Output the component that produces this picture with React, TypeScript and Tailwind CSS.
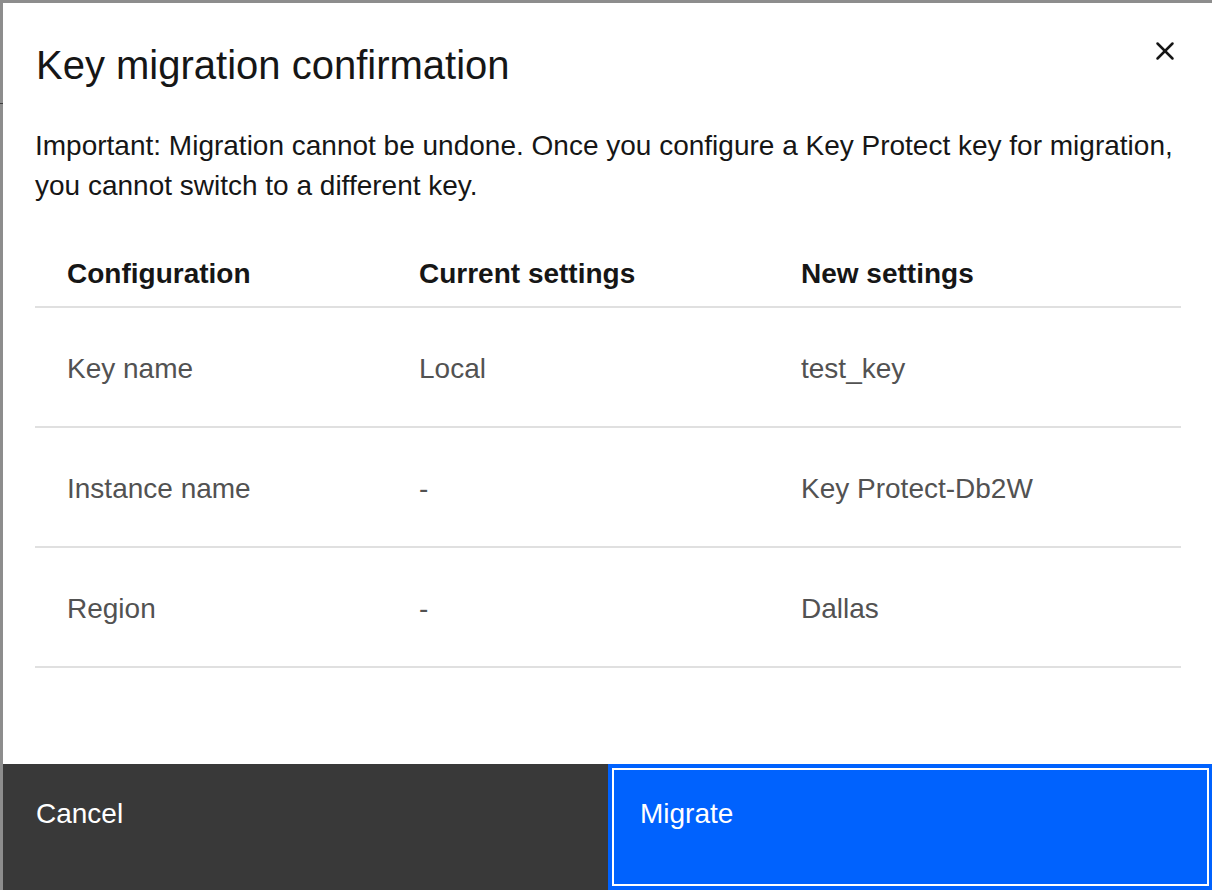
import { X } from 'lucide-react';

const rows = [
  { config: 'Key name', current: 'Local', next: 'test_key' },
  { config: 'Instance name', current: '-', next: 'Key Protect-Db2W' },
  { config: 'Region', current: '-', next: 'Dallas' },
];

export default function App() {
  return (
    <div
      className="w-[1212px] h-[890px] overflow-hidden bg-[#8d8d8d] pt-[3px] flex"
      style={{ fontFamily: '"Liberation Sans", Arial, sans-serif' }}
    >
      {/* left edge of the page behind the modal */}
      <div className="w-[3px] shrink-0">
        <div className="mt-[100px] h-px bg-[#3d3d3d]" />
      </div>

      {/* Modal */}
      <div className="w-[1210px] shrink-0 bg-white flex flex-col">
        {/* Header */}
        <div className="flex items-start">
          <h2 className="flex-1 pl-[33px] pt-[34px] text-[40px] leading-[56px] font-normal text-[#161616]">
            Key migration confirmation
          </h2>
          <button className="w-[96px] h-[96px] flex items-center justify-center text-[#161616]">
            <X size={30} strokeWidth={2} />
          </button>
        </div>

        {/* Body */}
        <div className="flex-1 px-[32px]">
          <p className="mt-[27px] text-[28px] leading-[40px] text-[#161616] whitespace-nowrap">
            Important: Migration cannot be undone. Once you configure a Key Protect key for migration,
            <br />
            you cannot switch to a different key.
          </p>

          <table className="mt-[35px] w-[1146px] table-fixed border-collapse text-[28px]">
            <thead>
              <tr className="h-[66px] border-b-2 border-[#e0e0e0]">
                <th className="w-[352px] pl-[32px] text-left font-bold text-[#161616]">Configuration</th>
                <th className="w-[382px] pl-[32px] text-left font-bold text-[#161616]">Current settings</th>
                <th className="pl-[32px] text-left font-bold text-[#161616]">New settings</th>
              </tr>
            </thead>
            <tbody>
              {rows.map((row) => (
                <tr key={row.config} className="h-[120px] border-b-2 border-[#e0e0e0] text-[#525252]">
                  <td className="pl-[32px] pt-[3px]">{row.config}</td>
                  <td className="pl-[32px] pt-[3px]">{row.current}</td>
                  <td className="pl-[32px] pt-[3px]">{row.next}</td>
                </tr>
              ))}
            </tbody>
          </table>
        </div>

        {/* Footer */}
        <div className="grid grid-cols-2 h-[126px]">
          <button className="bg-[#393939] text-white text-[28px] leading-[40px] text-left pl-[33px] pt-[30px] flex items-start">
            Cancel
          </button>
          <button className="bg-[#0062fe] text-white text-[28px] leading-[40px] text-left pl-[32px] pt-[30px] flex items-start shadow-[inset_0_0_0_4px_#0062fe,inset_0_0_0_6px_#ffffff]">
            Migrate
          </button>
        </div>
      </div>
    </div>
  );
}
